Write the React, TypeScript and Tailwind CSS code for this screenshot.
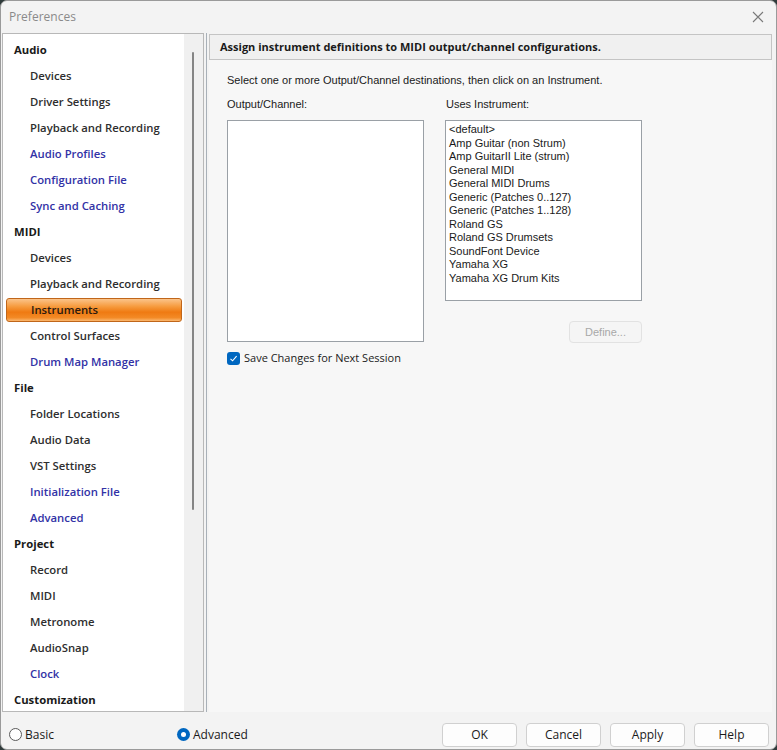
import React from "react";

type Row = { label: string; kind: "head" | "item" | "link" | "sel" };

const rows: Row[] = [
  { label: "Audio", kind: "head" },
  { label: "Devices", kind: "item" },
  { label: "Driver Settings", kind: "item" },
  { label: "Playback and Recording", kind: "item" },
  { label: "Audio Profiles", kind: "link" },
  { label: "Configuration File", kind: "link" },
  { label: "Sync and Caching", kind: "link" },
  { label: "MIDI", kind: "head" },
  { label: "Devices", kind: "item" },
  { label: "Playback and Recording", kind: "item" },
  { label: "Instruments", kind: "sel" },
  { label: "Control Surfaces", kind: "item" },
  { label: "Drum Map Manager", kind: "link" },
  { label: "File", kind: "head" },
  { label: "Folder Locations", kind: "item" },
  { label: "Audio Data", kind: "item" },
  { label: "VST Settings", kind: "item" },
  { label: "Initialization File", kind: "link" },
  { label: "Advanced", kind: "link" },
  { label: "Project", kind: "head" },
  { label: "Record", kind: "item" },
  { label: "MIDI", kind: "item" },
  { label: "Metronome", kind: "item" },
  { label: "AudioSnap", kind: "item" },
  { label: "Clock", kind: "link" },
  { label: "Customization", kind: "head" },
];

const instruments = [
  "<default>",
  "Amp Guitar (non Strum)",
  "Amp GuitarII Lite (strum)",
  "General MIDI",
  "General MIDI Drums",
  "Generic (Patches 0..127)",
  "Generic (Patches 1..128)",
  "Roland GS",
  "Roland GS Drumsets",
  "SoundFont Device",
  "Yamaha XG",
  "Yamaha XG Drum Kits",
];

const TreeRow = ({ row }: { row: Row }) => {
  if (row.kind === "head") {
    return (
      <div className="h-[26px] flex items-center pl-[11px] font-bold text-[#1a1a1a]">
        {row.label}
      </div>
    );
  }
  if (row.kind === "sel") {
    return (
      <div className="h-[26px] py-[1px] pl-[3px] pr-[2px]">
        <div className="h-[24px] flex items-center pl-[24px] rounded-[3px] border border-[#c0661a] bg-[linear-gradient(to_bottom,#fbc48a_0%,#f69a3c_35%,#ef7a12_60%,#f38a26_85%,#fbb870_100%)] font-semibold text-[#2a1a10]">
          {row.label}
        </div>
      </div>
    );
  }
  return (
    <div
      className={
        row.kind === "link"
          ? "h-[26px] flex items-center pl-[27px] font-semibold text-[#3232a6]"
          : "h-[26px] flex items-center pl-[27px] font-semibold text-[#2e2e2e]"
      }
    >
      {row.label}
    </div>
  );
};

const Btn = ({ label }: { label: string }) => (
  <button className="w-[75px] h-[24px] rounded-[4px] border border-[#d0d0d0] bg-[#fdfdfd] text-[12px] text-[#1a1a1a] flex items-center justify-center">
    {label}
  </button>
);

export default function App() {
  return (
    <div className="w-[777px] h-[750px] bg-[#2f3b3b]">
      <div
        className="w-[777px] h-[750px] bg-[#f3f3f3] rounded-[7px] border border-[#9a9a9a] flex flex-col overflow-hidden"
        style={{ fontFamily: '"Open Sans", "Noto Sans", sans-serif' }}
      >
        {/* title bar */}
        <div className="h-[32px] shrink-0 flex items-center justify-between pl-[8px] pr-[12px]">
          <span className="text-[12px] text-[#8a8a8a]">Preferences</span>
          <svg width="12" height="12" viewBox="0 0 12 12">
            <path d="M1 1 L11 11 M11 1 L1 11" stroke="#7a7a7a" strokeWidth="1.1" />
          </svg>
        </div>

        {/* body */}
        <div className="flex flex-row h-[679px] shrink-0 pl-[1px] pr-[4px]">
          {/* tree panel */}
          <div className="w-[202px] h-full border border-[#b8b8b8] flex flex-row bg-white shrink-0">
            <div className="w-[181px] h-full bg-white text-[11.3px] leading-none overflow-hidden pt-[3px]">
              {rows.map((r, i) => (
                <TreeRow key={i} row={r} />
              ))}
            </div>
            <div className="flex-1 h-full bg-[#f0f0f0] flex justify-center pt-[18px] pr-[1px]">
              <div className="w-[2px] h-[458px] bg-[#858585] rounded-full" />
            </div>
          </div>

          {/* right panel */}
          <div className="flex-1 ml-[2px] h-full border-l border-[#a8b0b8] flex flex-col">
            <div className="ml-[2px] mt-[1px] h-[26px] border border-[#c4c4c4] bg-[#f0f0f0] flex items-center pl-[10px] text-[11px] font-bold text-[#1a1a1a]">
              Assign instrument definitions to MIDI output/channel configurations.
            </div>
            <div
              className="flex-1 bg-[#f7f7f7] ml-[2px] pl-[18px] pt-[14px] text-[11px] text-[#1a1a1a]"
              style={{ fontFamily: '"Liberation Sans", Arial, sans-serif' }}
            >
              <div className="h-[13px] leading-[13px]">
                Select one or more Output/Channel destinations, then click on an Instrument.
              </div>
              <div className="flex flex-row mt-[11px]">
                <div className="w-[218px] flex flex-col">
                  <div className="h-[13px] leading-[13px]">Output/Channel:</div>
                  <div className="mt-[9px] w-[197px] h-[222px] bg-white border border-[#9aa0a6]" />
                  <div className="mt-[8px] flex items-center gap-[4px]">
                    <div className="w-[13px] h-[13px] rounded-[3px] bg-[#0067c0] flex items-center justify-center">
                      <svg width="9" height="9" viewBox="0 0 9 9">
                        <path d="M1.5 4.8 L3.6 6.8 L7.6 2.2" stroke="white" strokeWidth="1.1" fill="none" />
                      </svg>
                    </div>
                    <span
                      className="text-[11px] text-[#1a1a1a]"
                      style={{ fontFamily: '"Open Sans", "Noto Sans", sans-serif' }}
                    >
                      Save Changes for Next Session
                    </span>
                  </div>
                </div>
                <div className="flex flex-col">
                  <div className="h-[13px] leading-[13px] pl-[1px]">Uses Instrument:</div>
                  <div className="mt-[9px] w-[197px] h-[181px] bg-white border border-[#9aa0a6] pl-[3px] pt-[2px]">
                    {instruments.map((n) => (
                      <div key={n} className="h-[13.5px] leading-[13.5px] whitespace-nowrap">
                        {n}
                      </div>
                    ))}
                  </div>
                  <div className="flex justify-end mt-[20px]">
                    <div className="w-[73px] h-[22px] rounded-[4px] border border-[#e2e2e2] bg-[#f5f5f5] flex items-center justify-center text-[11px] text-[#a8a8a8]">
                      Define...
                    </div>
                  </div>
                </div>
              </div>
            </div>
          </div>
        </div>

        {/* bottom bar */}
        <div className="flex-1 flex flex-row items-center pl-[8px] pr-[7px] pt-[8px] text-[12px] text-[#1a1a1a]">
          <div className="flex items-center gap-[3px] w-[168px]">
            <div className="w-[13px] h-[13px] rounded-full border border-[#5a5a5a] bg-white" />
            <span>Basic</span>
          </div>
          <div className="flex items-center gap-[3px]">
            <div className="w-[13px] h-[13px] rounded-full bg-[#0067c0] flex items-center justify-center">
              <div className="w-[5px] h-[5px] rounded-full bg-white" />
            </div>
            <span>Advanced</span>
          </div>
          <div className="ml-auto flex flex-row gap-[9px]">
            <Btn label="OK" />
            <Btn label="Cancel" />
            <Btn label="Apply" />
            <Btn label="Help" />
          </div>
        </div>
      </div>
    </div>
  );
}
